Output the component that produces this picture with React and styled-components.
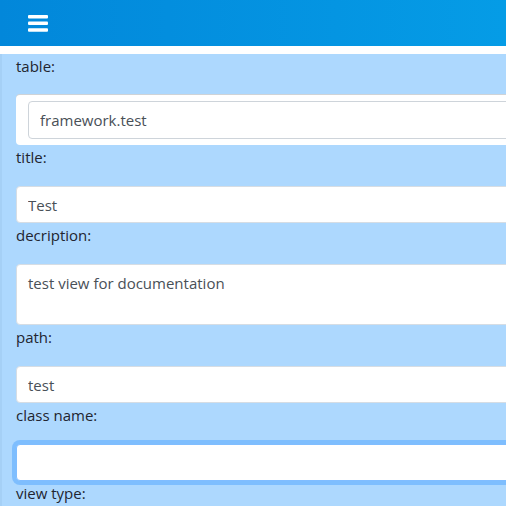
import React from "react";
import styled, { createGlobalStyle } from "styled-components";

const Global = createGlobalStyle`
  html, body { margin: 0; padding: 0; overflow: hidden; background: #fff; }
  body { font-family: "Open Sans", "Segoe UI", sans-serif; font-size: 15px; }
`;

const Page = styled.div`
  width: 720px;
`;

const Header = styled.header`
  height: 46px;
  display: flex;
  align-items: center;
  padding-left: 28px;
  background: linear-gradient(to right, #0287da, #059ce6 70%, #079fe9);
`;

const MenuButton = styled.button`
  border: 0;
  background: none;
  padding: 0;
  display: flex;
  cursor: pointer;
  margin-top: 1px;
`;

const Main = styled.main`
  margin-top: 8px;
  background: #add8fe;
  border-left: 2px solid #a5d0f6;
  padding: 0 0 0 14px;
  display: flex;
  flex-direction: column;
`;

const Label = styled.label`
  display: block;
  height: 24px;
  line-height: 24px;
  margin-bottom: 17px;
  color: #222530;
  padding-left: 0;
`;

const SelectWrap = styled.div`
  background: #fff;
  border-radius: 4px;
  padding: 6px 12px;
  box-shadow: 0 -1px 0 #cfd3d7;
`;

const Input = styled.input`
  display: block;
  box-sizing: border-box;
  width: 100%;
  height: ${(p) => (p.$h ? p.$h : 37)}px;
  padding: 0 11px;
  font: inherit;
  color: #495057;
  background: #fff;
  border: 1px solid ${(p) => (p.$focused ? "#80bdff" : p.$bordered ? "#ced4da" : "#d6dde4")};
  border-radius: 4px;
  outline: none;
  box-shadow: ${(p) => (p.$focused ? "0 0 0 4px rgba(0, 123, 255, 0.27)" : "none")};
`;

const TextArea = styled.textarea`
  display: block;
  box-sizing: border-box;
  width: 100%;
  height: 61px;
  padding: 6px 11px;
  font: inherit;
  line-height: 24px;
  color: #495057;
  background: #fff;
  border: 1px solid #d6dde4;
  border-radius: 4px;
  resize: none;
  outline: none;
`;

const Bars = () => (
  <svg width="20" height="17" viewBox="0 0 20 17">
    <rect x="0" y="0" width="20" height="3.5" rx="1" fill="#fff" />
    <rect x="0" y="6.6" width="20" height="3.5" rx="1" fill="#fff" />
    <rect x="0" y="13.2" width="20" height="3.5" rx="1" fill="#fff" />
  </svg>
);

export default function App() {
  return (
    <Page>
      <Global />
      <Header>
        <MenuButton aria-label="menu">
          <Bars />
        </MenuButton>
      </Header>
      <Main>
        <Label>table:</Label>
        <SelectWrap>
          <Input $h={38} $bordered readOnly value="framework.test" />
        </SelectWrap>
        <Label>title:</Label>
        <Input readOnly value="Test" />
        <Label>decription:</Label>
        <TextArea readOnly value="test view for documentation" />
        <Label>path:</Label>
        <Input readOnly value="test" />
        <Label>class name:</Label>
        <Input $focused readOnly value="" />
        <Label>view type:</Label>
      </Main>
    </Page>
  );
}
